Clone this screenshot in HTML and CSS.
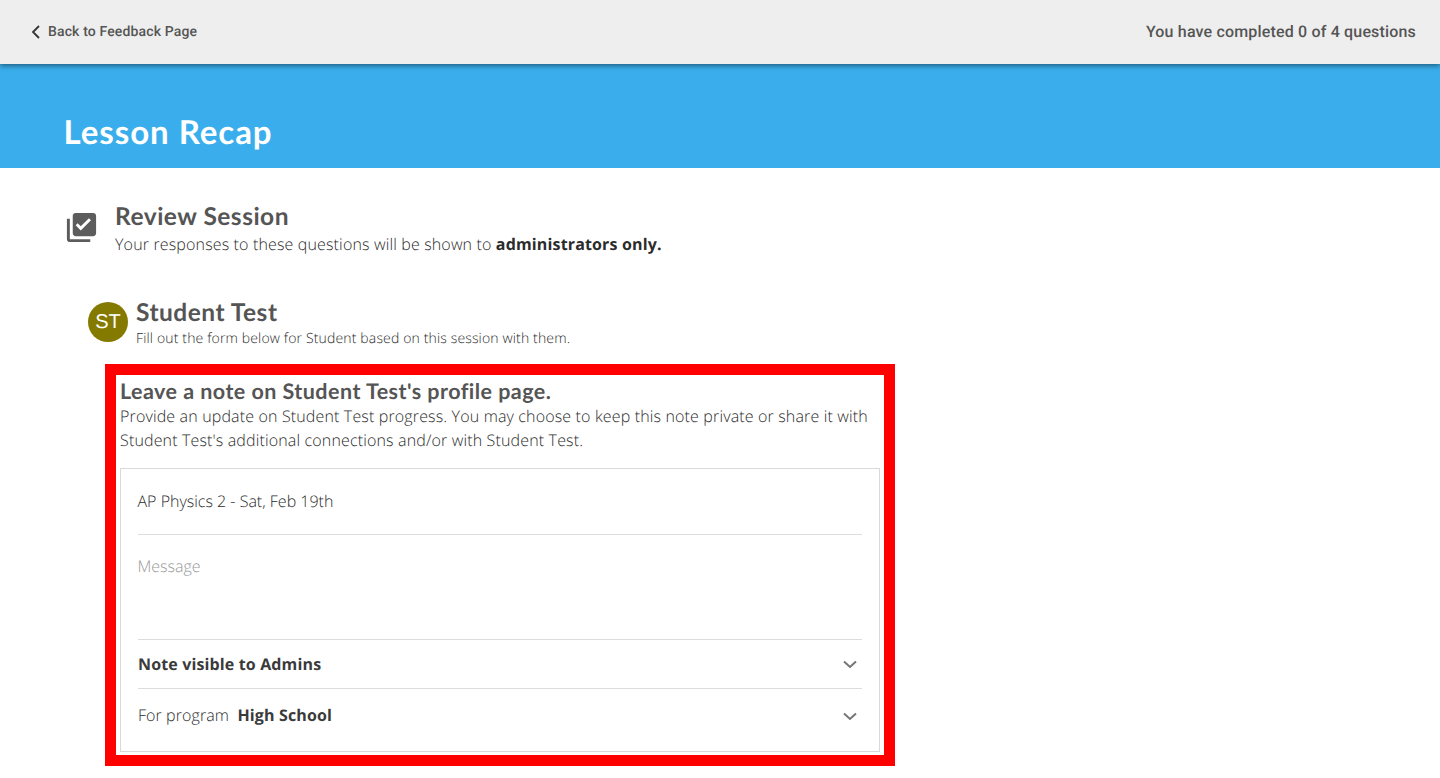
FILE: index.html
```html
<!DOCTYPE html>
<html lang="en">
<head>
<meta charset="utf-8">
<title>Lesson Recap</title>
<link rel="stylesheet" href="styles.css">
</head>
<body>
<header class="topbar">
  <a class="back">
    <svg class="back-icon" width="10" height="14" viewBox="0 0 10 14"><path d="M8 1 2 7l6 6" fill="none" stroke="#333" stroke-width="1.800"/></svg>
    <span>Back to Feedback Page</span>
  </a>
  <span class="progress">You have completed 0 of 4 questions</span>
</header>
<section class="banner"><h1>Lesson Recap</h1></section>
<main class="content">
  <div class="review">
    <svg class="review-icon" width="35" height="35" viewBox="0 0 24 24"><path fill="#5c5c5c" d="M4 6H2v14c0 1.100.9 2 2 2h14v-2H4V6zm16-4H8c-1.100 0-2 .9-2 2v12c0 1.100.9 2 2 2h12c1.100 0 2-.9 2-2V4c0-1.100-.9-2-2-2zm-8.500 12-3.500-3.500 1.400-1.400 2.100 2.100 5.600-5.600 1.400 1.400-7 7z"/></svg>
    <div>
      <h2>Review Session</h2>
      <p class="review-sub">Your responses to these questions will be shown to <b>administrators only.</b></p>
    </div>
  </div>
  <div class="student">
    <div class="avatar">ST</div>
    <div>
      <h2>Student Test</h2>
      <p class="student-sub">Fill out the form below for Student based on this session with them.</p>
    </div>
  </div>
  <section class="highlight">
    <h3>Leave a note on Student Test's profile page.</h3>
    <p class="intro">Provide an update on Student Test progress. You may choose to keep this note private or share it with Student Test's additional connections and/or with Student Test.</p>
    <div class="card">
      <div class="row row-session">AP Physics 2 - Sat, Feb 19th</div>
      <div class="row row-message">Message</div>
      <div class="row row-select row-visible">
        <b>Note visible to Admins</b>
        <svg class="chev" width="14" height="9" viewBox="0 0 14 9"><path d="M1 1.500 7 7l6-5.500" fill="none" stroke="#757575" stroke-width="2"/></svg>
      </div>
      <div class="row row-select row-program">
        <span class="program">For program&nbsp; <b>High School</b></span>
        <svg class="chev chev-low" width="14" height="9" viewBox="0 0 14 9"><path d="M1 1.500 7 7l6-5.500" fill="none" stroke="#757575" stroke-width="2"/></svg>
      </div>
    </div>
  </section>
</main>
</body>
</html>
```
FILE: styles.css
```css
* { box-sizing: border-box; }
html, body { margin: 0; height: 100%; }
body {
  height: 778px;
  overflow: hidden;
  background: #fff;
  color: #2b2b2b;
  font-family: "Open Sans", "Liberation Sans", sans-serif;
  font-weight: 300;
  text-rendering: geometricPrecision;
}
h1, h2, h3, p { margin: 0; }
b { font-weight: 700; }

.topbar {
  position: relative;
  z-index: 1;
  height: 64px;
  padding: 0 24px 2px 31px;
  display: flex;
  align-items: center;
  justify-content: space-between;
  background: #eee;
  box-shadow: 0 2px 5px rgba(0, 0, 0, 0.45);
  font-family: Roboto, "Liberation Sans", sans-serif;
  font-weight: 500;
  color: #555;
}
.back {
  display: flex;
  align-items: center;
  gap: 7px;
  margin-top: 2px;
  font-size: 14px;
  letter-spacing: 0.14px;
}
.back-icon { display: block; }
.progress { font-size: 16px; letter-spacing: 0.17px; }

.banner {
  height: 104px;
  padding: 48px 0 0 63.500px;
  background: #3aaeec;
}
.banner h1 {
  font-family: Lato, "Liberation Sans", sans-serif;
  font-size: 33px;
  line-height: 40px;
  letter-spacing: 0.950px;
  font-weight: 700;
  color: #fff;
}

.content { padding: 32px 0 0 64px; }
.review { display: flex; gap: 16px; }
.review-icon { margin: 10px 0 0 0; flex: none; }
.review h2, .student h2 {
  height: 32px;
  padding-top: 1px;
  font-family: Lato, "Liberation Sans", sans-serif;
  font-weight: 700;
  font-size: 24.500px;
  line-height: 32px;
  letter-spacing: 0.500px;
  color: #555;
}
.student h2 { height: 33px; }
.review-sub { font-size: 16px; line-height: 24px; letter-spacing: 0.150px; }
.student { display: flex; gap: 8px; margin: 40px 0 0 24px; }
.avatar {
  flex: none;
  width: 40px;
  height: 40px;
  margin-top: 6px;
  border-radius: 50%;
  display: flex;
  align-items: center;
  justify-content: center;
  background: #857a00;
  color: #fff;
  font-family: "Liberation Sans", sans-serif;
  font-size: 20px;
  font-weight: 400;
}
.student-sub { font-size: 14px; line-height: 20px; letter-spacing: 0.150px; }

.highlight {
  width: 790px;
  height: 402px;
  margin: 15px 0 0 41px;
  padding: 0 4px;
  border: 11px solid #f00;
}
.highlight h3 {
  font-family: Lato, "Liberation Sans", sans-serif;
  font-size: 21.500px;
  line-height: 29px;
  padding-top: 2px;
  height: 29px;
  letter-spacing: 0.460px;
  font-weight: 700;
  color: #555;
}
.intro { font-size: 16px; line-height: 24px; height: 64px; letter-spacing: 0.150px; }
.card {
  width: 760px;
  height: 284px;
  padding: 0 17px;
  border: 1px solid #d9d9d9;
}
.row { display: flex; align-items: center; font-size: 16px; }
.row + .row { border-top: 1px solid #ddd; }
.row-session { height: 65px; padding-bottom: 2px; text-indent: -0.500px; }
.row-message { height: 105px; align-items: flex-start; padding-top: 20px; color: #999; text-indent: -0.500px; }
.row-select { justify-content: space-between; padding-right: 5px; }
.row-visible { height: 49px; }
.row-program { height: 54px; }
.row b { letter-spacing: 0.140px; color: #3a3a3a; }
.program { position: relative; top: -1px; letter-spacing: 0.080px; }
.chev { display: block; }
.chev-low { position: relative; top: 1px; }
```
